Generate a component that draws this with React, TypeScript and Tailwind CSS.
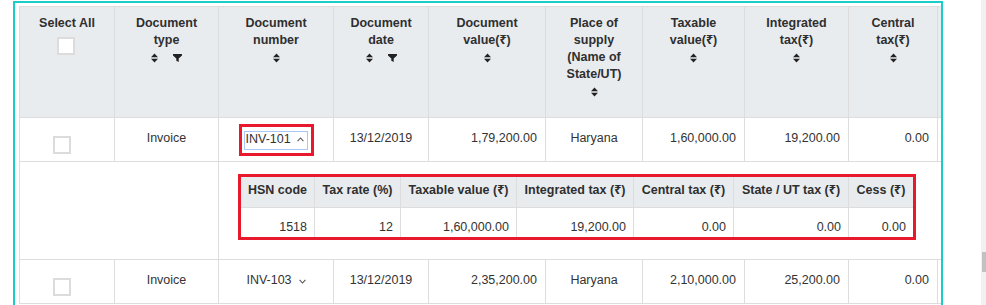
import React from "react";

const Sort = () => (
  <svg width="7" height="10" viewBox="0 0 7 10" className="block">
    <path d="M0 4.2L3.5 0.6L7 4.2Z M0 5.8L3.5 9.4L7 5.8Z" fill="#222" />
  </svg>
);

const Filter = () => (
  <svg width="9" height="8" viewBox="0 0 9 8" className="block">
    <path d="M0 0H9V1.4L5.7 4.4V8L3.3 6.8V4.4L0 1.4Z" fill="#222" />
  </svg>
);

const Caret = ({ up }: { up?: boolean }) => (
  <svg width="7" height="5" viewBox="0 0 7 5" className="block">
    <polyline
      points={up ? "0.6,4.2 3.5,1 6.4,4.2" : "0.6,0.8 3.5,4 6.4,0.8"}
      fill="none"
      stroke="#555"
      strokeWidth="1.1"
    />
  </svg>
);

const Box = () => (
  <div className="ml-[33px] h-[18px] w-[18px] border-2 border-[#dcdcdc] bg-white" />
);

const th =
  "border-r border-b border-[#dddddd] bg-[#e9ecef] align-top pt-[8px] px-[4px] text-center text-[12.5px] leading-[17px] font-bold text-[#2f2f2f]";
const base =
  "border-r border-b border-[#dddddd] align-top text-[12.5px] leading-[17px] text-[#333]";
const td = base + " pt-[12px]";

type Row = {
  num: string;
  open?: boolean;
  value: string;
  taxable: string;
  integrated: string;
};

const rows: Row[] = [
  { num: "INV-101", open: true, value: "1,79,200.00", taxable: "1,60,000.00", integrated: "19,200.00" },
  { num: "INV-103", value: "2,35,200.00", taxable: "2,10,000.00", integrated: "25,200.00" },
];

const nth =
  "border-r border-b border-[#dddddd] bg-[#e9ecef] align-top pt-[5px] px-[2px] text-center text-[12.5px] leading-[17px] font-bold text-[#2f2f2f] whitespace-nowrap";
const ntd =
  "border-r border-[#dddddd] align-top pt-[11px] pr-[7px] text-right text-[12.5px] leading-[17px] text-[#333]";

function Nested() {
  return (
    <div className="w-[678px] border-[3px] border-[#e8192c]">
      <table className="w-[672px] table-fixed border-separate border-spacing-0">
        <colgroup>
          <col className="w-[74px]" />
          <col className="w-[86px]" />
          <col className="w-[116px]" />
          <col className="w-[117px]" />
          <col className="w-[100px]" />
          <col className="w-[115px]" />
          <col className="w-[64px]" />
        </colgroup>
        <thead>
          <tr className="h-[31px]">
            <th className={nth}>HSN code</th>
            <th className={nth}>Tax rate (%)</th>
            <th className={nth}>Taxable value (₹)</th>
            <th className={nth}>Integrated tax (₹)</th>
            <th className={nth}>Central tax (₹)</th>
            <th className={nth}>State / UT tax (₹)</th>
            <th className={nth + " border-r-0"}>Cess (₹)</th>
          </tr>
        </thead>
        <tbody>
          <tr className="h-[29px]">
            <td className={ntd}>1518</td>
            <td className={ntd}>12</td>
            <td className={ntd}>1,60,000.00</td>
            <td className={ntd}>19,200.00</td>
            <td className={ntd}>0.00</td>
            <td className={ntd}>0.00</td>
            <td className={ntd + " border-r-0"}>0.00</td>
          </tr>
        </tbody>
      </table>
    </div>
  );
}

export default function App() {
  return (
    <div className="relative h-[305px] w-[986px] overflow-hidden bg-white font-['Liberation_Sans','Noto_Sans','DejaVu_Sans',sans-serif]">
      <div className="ml-[13px] mt-[1px] h-[320px] w-[930px] border-x-2 border-t-2 border-[#19cec6]">
        <div className="h-full overflow-hidden pl-[4px] pt-[3px]">
          <table className="w-[1019px] table-fixed border-separate border-spacing-0 border-l border-t border-[#dddddd]">
            <colgroup>
              <col className="w-[95px]" />
              <col className="w-[104px]" />
              <col className="w-[115px]" />
              <col className="w-[95px]" />
              <col className="w-[117px]" />
              <col className="w-[97px]" />
              <col className="w-[102px]" />
              <col className="w-[104px]" />
              <col className="w-[89px]" />
              <col className="w-[100px]" />
            </colgroup>
            <thead>
              <tr className="h-[111px]">
                <th className={th + " px-0"}>
                  <div>Select All</div>
                  <div className="mt-[5px]">
                    <Box />
                  </div>
                </th>
                <th className={th}>
                  <div>Document</div>
                  <div>type</div>
                  <div className="flex h-[17px] items-center justify-center gap-[15px]">
                    <Sort />
                    <Filter />
                  </div>
                </th>
                <th className={th}>
                  <div>Document</div>
                  <div>number</div>
                  <div className="flex h-[17px] items-center justify-center">
                    <Sort />
                  </div>
                </th>
                <th className={th}>
                  <div>Document</div>
                  <div>date</div>
                  <div className="flex h-[17px] items-center justify-center gap-[15px]">
                    <Sort />
                    <Filter />
                  </div>
                </th>
                <th className={th}>
                  <div>Document</div>
                  <div>value(₹)</div>
                  <div className="flex h-[17px] items-center justify-center">
                    <Sort />
                  </div>
                </th>
                <th className={th}>
                  <div>Place of</div>
                  <div>supply</div>
                  <div>(Name of</div>
                  <div>State/UT)</div>
                  <div className="flex h-[17px] items-center justify-center">
                    <Sort />
                  </div>
                </th>
                <th className={th}>
                  <div>Taxable</div>
                  <div>value(₹)</div>
                  <div className="flex h-[17px] items-center justify-center">
                    <Sort />
                  </div>
                </th>
                <th className={th}>
                  <div>Integrated</div>
                  <div>tax(₹)</div>
                  <div className="flex h-[17px] items-center justify-center">
                    <Sort />
                  </div>
                </th>
                <th className={th}>
                  <div>Central</div>
                  <div>tax(₹)</div>
                  <div className="flex h-[17px] items-center justify-center">
                    <Sort />
                  </div>
                </th>
                <th className={th}></th>
              </tr>
            </thead>
            <tbody>
              {rows.map((r) => (
                <React.Fragment key={r.num}>
                  <tr className="h-[44px]">
                    <td className={base + " pt-[18px]"}>
                      <Box />
                    </td>
                    <td className={td + " text-center"}>Invoice</td>
                    {r.open ? (
                      <td className={base + " pt-[6px]"}>
                        <div className="mx-auto w-fit border-[3px] border-[#e8192c] pb-[3px] pl-[2px] pr-[3px] pt-[4px]">
                          <div className="flex h-[19px] w-[64px] items-start border-[1.5px] border-[#a9c7f7] pl-[1px]">
                            <span className="mt-[-0.5px] leading-[14px]">{r.num}</span>
                            <span className="ml-[6px] mt-[5px]">
                              <Caret up />
                            </span>
                          </div>
                        </div>
                      </td>
                    ) : (
                      <td className={td + " text-center"}>
                        <div className="inline-flex items-start">
                          <span>{r.num}</span>
                          <span className="ml-[7px] mt-[7px]">
                            <Caret />
                          </span>
                        </div>
                      </td>
                    )}
                    <td className={td + " text-center"}>13/12/2019</td>
                    <td className={td + " pr-[8px] text-right"}>{r.value}</td>
                    <td className={td + " text-center"}>Haryana</td>
                    <td className={td + " pr-[8px] text-right"}>{r.taxable}</td>
                    <td className={td + " pr-[8px] text-right"}>{r.integrated}</td>
                    <td className={td + " pr-[8px] text-right"}>0.00</td>
                    <td className={base}></td>
                  </tr>
                  {r.open && (
                    <tr className="h-[98px]">
                      <td colSpan={2} className="border-b border-r border-[#dddddd]"></td>
                      <td colSpan={8} className="border-b border-r border-[#dddddd] align-top pl-[19px] pt-[12px]">
                        <Nested />
                      </td>
                    </tr>
                  )}
                </React.Fragment>
              ))}
            </tbody>
          </table>
        </div>
      </div>
      <div className="absolute right-0 top-0 h-[305px] w-[5px] bg-[#f1f1f1]">
        <div className="ml-[1px] mt-[252px] h-[20px] w-[4px] bg-[#c1c1c1]" />
      </div>
    </div>
  );
}
